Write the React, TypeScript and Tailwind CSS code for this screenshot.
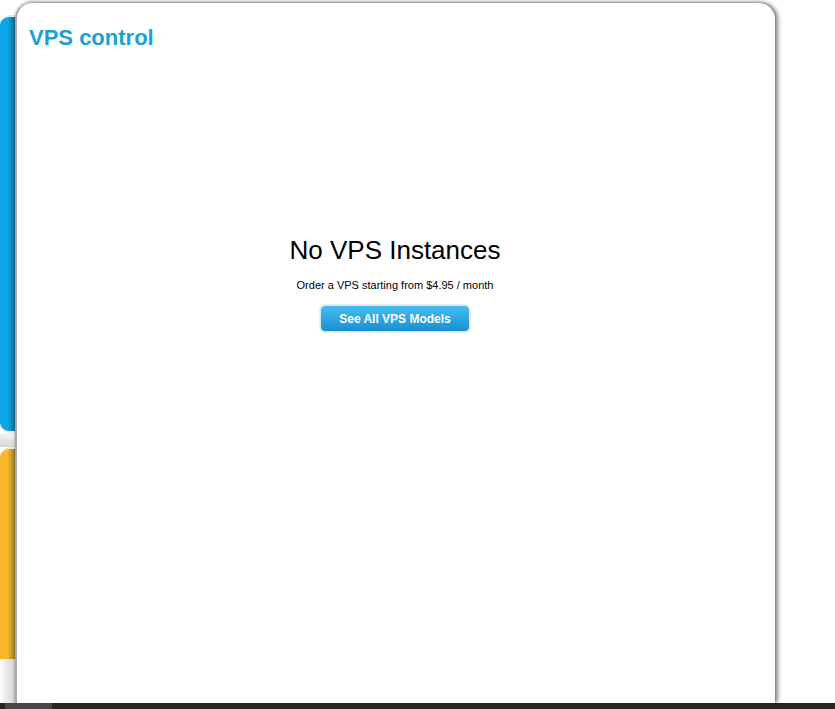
import React from 'react';

export default function App() {
  return (
    <div className="w-[835px] h-[709px] bg-white flex flex-col overflow-hidden" style={{ fontFamily: '"Liberation Sans", Arial, sans-serif' }}>
      <div className="flex-1 flex min-h-0 pt-[3px]">
        {/* Side tabs peeking out behind the panel */}
        <div className="w-[15px] flex flex-col pt-[12px]">
          <div className="h-[418px] bg-gradient-to-r from-[#0aa6e6] from-50% to-[#0d6f99] rounded-tl-[10px] rounded-bl-[10px] border-y-2 border-[#e8e8e8]" />
          <div className="h-[14px] bg-gradient-to-b from-[#f4f4f4] to-[#d6d6d6]" />
          <div className="h-[212px] bg-gradient-to-r from-[#fbb72a] from-50% to-[#9a8426] rounded-tl-[10px] border-t-2 border-[#eaeaea]" />
          <div className="flex-1 bg-gradient-to-r from-white to-[#d0d0d0]" />
        </div>

        {/* Main panel */}
        <div className="w-[760px] bg-white rounded-t-[16px] border-l-2 border-[#a9a9a9] shadow-[3px_0_4px_rgba(0,0,0,0.45),0_-1px_3px_rgba(0,0,0,0.3)] flex flex-col">
          <h1 className="pt-[21px] pl-[12px] text-[22px] leading-[28px] font-bold text-[#1a9fd9]">VPS control</h1>
          <div className="flex flex-col items-center pt-[183px] pr-[2px]">
            <h2 className="text-[26px] leading-[30px] text-black">No VPS Instances</h2>
            <p className="mt-[13px] text-[11px] leading-[14px] text-black">Order a VPS starting from $4.95 / month</p>
            <button className="mt-[13px] w-[150px] h-[27px] rounded-[5px] border border-[#d8e6ee] shadow-[0_0_2px_rgba(0,0,0,0.25)] bg-gradient-to-b from-[#45bdf0] to-[#1690d2] text-white text-[12px] font-bold">
              See All VPS Models
            </button>
          </div>
        </div>
        <div className="flex-1" />
      </div>
      <div className="h-[6px] bg-[#2a2420] flex">
        <div className="ml-[5px] w-[47px] bg-[#4a4646]" />
      </div>
    </div>
  );
}
